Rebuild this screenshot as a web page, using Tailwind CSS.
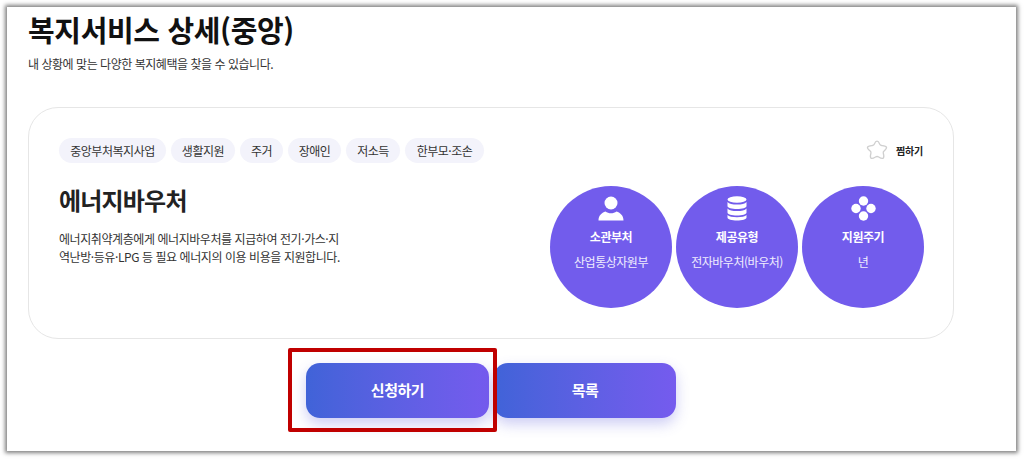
<!DOCTYPE html>
<html lang="ko" class="h-[459px]">
<head>
<meta charset="utf-8">
<script src="https://cdn.jsdelivr.net/npm/@tailwindcss/browser@4"></script>
</head>
<body class="h-[459px] bg-white overflow-hidden pl-[7px] pt-[7px] font-['Noto_Sans_CJK_KR','Noto_Sans',sans-serif]">
<div class="relative w-[1009px] h-[444px] bg-white shadow-[0_0_4px_2px_rgba(0,0,0,0.5)] pl-[21px] tracking-[-0.47px]">
  <h1 class="pt-[2px] text-[29px] leading-[40px] font-bold text-[#111] tracking-[-0.35px]">복지서비스 상세(중앙)</h1>
  <p class="mt-[6px] text-[12px] leading-[18px] text-[#333]">내 상황에 맞는 다양한 복지혜택을 찾을 수 있습니다.</p>
  <section class="mt-[34px] w-[926px] h-[232px] rounded-[30px] border border-[#e6e6e6] pl-[30px] pr-[29px] pt-[30px]">
    <div class="flex items-center justify-between h-[25px]">
      <ul class="flex gap-[5px] text-[12px] text-[#333]">
        <li class="h-[25px] w-[107px] rounded-full bg-[#f3f3fb] flex items-center justify-center">중앙부처복지사업</li>
        <li class="h-[25px] w-[64px] rounded-full bg-[#f3f3fb] flex items-center justify-center">생활지원</li>
        <li class="h-[25px] w-[43px] rounded-full bg-[#f3f3fb] flex items-center justify-center">주거</li>
        <li class="h-[25px] w-[53px] rounded-full bg-[#f3f3fb] flex items-center justify-center">장애인</li>
        <li class="h-[25px] w-[54px] rounded-full bg-[#f3f3fb] flex items-center justify-center">저소득</li>
        <li class="h-[25px] w-[79px] rounded-full bg-[#f3f3fb] flex items-center justify-center">한부모·조손</li>
      </ul>
      <div class="flex items-center gap-[8px] mr-[1px] text-[10px] font-bold text-[#222] tracking-[-0.2px]">
        <svg width="22" height="21" viewBox="0 0 22 21" fill="none" stroke="#cfcfcf" stroke-width="1.3" stroke-linejoin="round"><path d="M11 1.2c1.300 0 2 1.300 2.600 2.800.4 1 .9 1.400 2 1.500 1.900.2 4.400.3 4.900 1.700.4 1.300-1.200 2.600-2.500 3.800-.8.700-1 1.300-.7 2.300.5 1.700 1.100 3.900-.1 4.900-1.100.8-2.900-.2-4.500-1.200-1-.6-2.200-.6-3.200 0-1.600 1-3.400 2-4.500 1.200-1.200-1-.6-3.200-.1-4.900.3-1 .1-1.600-.7-2.300C2.700 9.800 1.100 8.500 1.500 7.200 2 5.800 4.500 5.700 6.400 5.500c1.100-.1 1.600-.5 2-1.500.6-1.500 1.300-2.800 2.600-2.800Z"/></svg>
        <span>찜하기</span>
      </div>
    </div>
    <div class="flex justify-between mt-[23px]">
      <div class="w-[285px]">
        <h2 class="-mt-[3px] text-[24px] leading-[34px] font-bold text-[#222] tracking-[-0.8px]">에너지바우처</h2>
        <p class="mt-[13px] text-[12px] leading-[18px] text-[#333] tracking-[-0.43px]">에너지취약계층에게 에너지바우처를 지급하여 전기·가스·지역난방·등유·LPG 등 필요 에너지의 이용 비용을 지원합니다.</p>
      </div>
      <div class="flex gap-[4px]">
        <div class="w-[122px] h-[122px] rounded-full bg-[#725cec] flex flex-col items-center text-white pt-[10px]">
          <svg class="h-[25px]" width="26" height="25" viewBox="0 0 26 25" fill="#fff"><circle cx="13" cy="7" r="6.500"/><path d="M0.500 24.500c0-5 3-7.500 7-9 1.500 1.200 3.500 1.800 5.500 1.800s4-.6 5.500-1.800c4 1.500 7 4 7 9Z"/></svg>
          <strong class="mt-[7px] text-[12px] leading-[18px] font-bold">소관부처</strong>
          <span class="mt-[7px] text-[12px] leading-[18px] text-white/90">산업통상자원부</span>
        </div>
        <div class="w-[122px] h-[122px] rounded-full bg-[#725cec] flex flex-col items-center text-white pt-[10px]">
          <svg class="h-[25px]" width="20" height="25" viewBox="0 0 20 25" fill="#fff"><ellipse cx="10" cy="3.500" rx="9.500" ry="3.300"/><path d="M.5 6c1.500 1.800 5 2.600 9.500 2.600S18 7.800 19.500 6v4c0 2-4.200 3-9.500 3S.5 12 .5 10Z"/><path d="M.5 12.500c1.500 1.800 5 2.600 9.500 2.600s8-.8 9.500-2.600v4c0 2-4.200 3-9.500 3s-9.500-1-9.500-3Z"/><path d="M.5 19c1.500 1.500 5 2.200 9.500 2.200s8-.7 9.500-2.200v2.500c0 2-4.200 3-9.500 3s-9.500-1-9.500-3Z"/></svg>
          <strong class="mt-[7px] text-[12px] leading-[18px] font-bold">제공유형</strong>
          <span class="mt-[7px] text-[12px] leading-[18px] text-white/90">전자바우처(바우처)</span>
        </div>
        <div class="w-[122px] h-[122px] rounded-full bg-[#725cec] flex flex-col items-center text-white pt-[10px]">
          <svg class="h-[25px]" width="25" height="25" viewBox="0 0 25 25" fill="#fff"><circle cx="12.500" cy="5" r="4.700"/><circle cx="5" cy="12.500" r="4.700"/><circle cx="20" cy="12.500" r="4.700"/><circle cx="12.500" cy="20" r="4.700"/></svg>
          <strong class="mt-[7px] text-[12px] leading-[18px] font-bold">지원주기</strong>
          <span class="mt-[7px] text-[12px] leading-[18px] text-white/90">년</span>
        </div>
      </div>
    </div>
  </section>
  <div class="flex gap-[5px] mt-[24px] pl-[278px]">
    <a class="w-[183px] h-[55px] rounded-[14px] bg-gradient-to-r from-[#4063d8] to-[#755bee] flex items-center justify-center text-white text-[15px] font-bold shadow-[0_6px_14px_rgba(90,90,220,0.3)]">신청하기</a>
    <a class="w-[182px] h-[55px] rounded-[14px] bg-gradient-to-r from-[#4063d8] to-[#755bee] flex items-center justify-center text-white text-[15px] font-bold shadow-[0_6px_14px_rgba(90,90,220,0.3)]">목록</a>
  </div>
  <div class="absolute left-[281px] top-[341px] w-[209px] h-[84px] border-[4px] border-[#c00000] rounded-[2px]"></div>
</div>
</body>
</html>
